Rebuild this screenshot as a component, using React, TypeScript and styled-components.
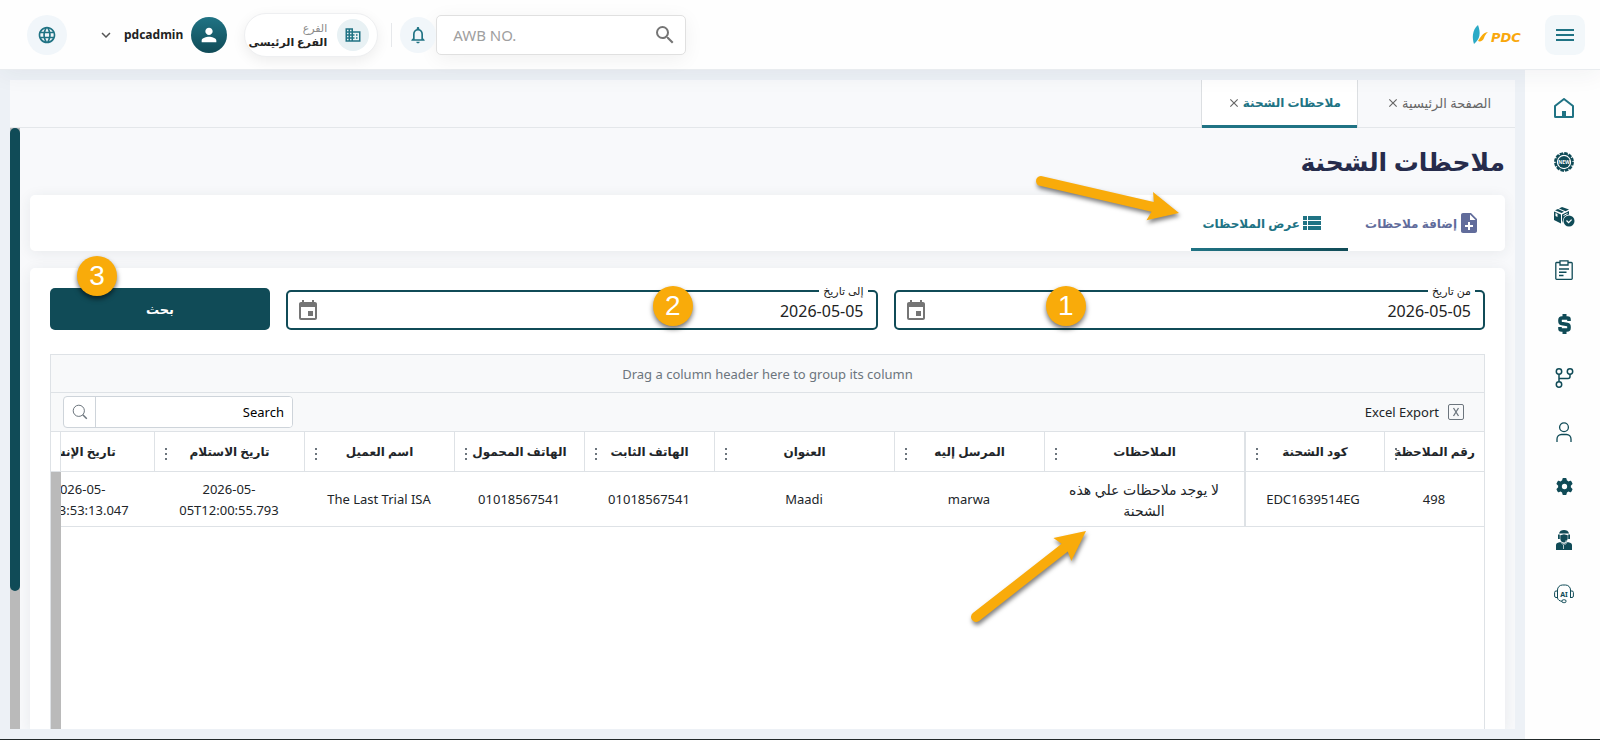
import React from "react";
import styled, { createGlobalStyle } from "styled-components";
import {
  MdBusiness,
  MdClose,
  MdEvent,
  MdKeyboardArrowDown,
  MdLanguage,
  MdMenu,
  MdNoteAdd,
  MdNotificationsNone,
  MdPerson,
  MdSearch,
  MdViewList,
} from "react-icons/md";
import { FaGear } from "react-icons/fa6";

const teal = "#207384";
const deep = "#104b57";
const orange = "#f9ab0a";
const line = "#dee2e6";
const uiFont = `"Noto Sans", "DejaVu Sans", sans-serif`;

const GlobalStyle = createGlobalStyle`
  *, *::before, *::after { box-sizing: border-box; }
  body { margin: 0; background: #edf1f6; font-family: ${uiFont}; color: #212529; }
  button, input { font-family: inherit; }
  button { border: 0; background: none; padding: 0; cursor: pointer; color: inherit; }
  svg { flex: none; }
`;

const Page = styled.div`
  height: 100vh;
  display: flex;
  flex-direction: column;
  border-bottom: 1px solid #22292a;
`;

/* ---------- top bar ---------- */

const TopBar = styled.header`
  flex: none;
  height: 70px;
  padding: 0 15px 0 27px;
  display: flex;
  align-items: center;
  background: #fefefe;
  border-bottom: 1px solid #e9ecef;
  box-shadow: 0 4px 24px rgba(30, 50, 70, 0.06);
  position: relative;
`;

const MenuButton = styled.button`
  width: 40px;
  height: 40px;
  border-radius: 10px;
  background: #f2f7fa;
  color: ${teal};
  display: grid;
  place-items: center;
`;

const Logo = styled.a`
  margin-right: 19px;
  display: flex;
`;

const Spacer = styled.div`
  flex: 1;
`;

const AwbSearch = styled.form`
  width: 250px;
  height: 40px;
  direction: ltr;
  display: flex;
  align-items: center;
  padding: 0 8px 0 16px;
  border: 1px solid #e0e0e0;
  border-radius: 5px;
  background: #fff;
  color: #757575;
  box-shadow: 0 4px 20px rgba(0, 0, 0, 0.06);
`;

const AwbInput = styled.input`
  flex: 1;
  min-width: 0;
  border: 0;
  padding: 0;
  outline: 0;
  font-size: 15px;
  background: none;
  &::placeholder { color: #a0a0a0; opacity: 1; }
`;

const IconButton = styled.button`
  display: grid;
  place-items: center;
`;

const RoundButton = styled.button<{ $size: number }>`
  width: ${(p) => p.$size}px;
  height: ${(p) => p.$size}px;
  border-radius: 50%;
  background: #f1f6fa;
  color: ${teal};
  display: grid;
  place-items: center;
`;

const Divider = styled.span`
  width: 1px;
  height: 24px;
  margin: 0 8px 0 13px;
  background: #e6e8eb;
`;

const BranchPill = styled.button`
  width: 134px;
  height: 44px;
  margin-left: 17px;
  padding: 0 8px;
  border: 1px solid #eeeff1;
  border-radius: 22px;
  display: flex;
  align-items: center;
  gap: 10px;
  background: #fff;
  box-shadow: 0 4px 14px rgba(0, 0, 0, 0.07);
`;

const BranchIcon = styled.span`
  flex: none;
  width: 32px;
  height: 32px;
  border-radius: 50%;
  background: #e8f1f4;
  color: ${teal};
  display: grid;
  place-items: center;
`;

const BranchText = styled.span`
  display: flex;
  flex-direction: column;
  align-items: flex-start;
  white-space: nowrap;
`;

const BranchCaption = styled.span`
  font-size: 11px;
  line-height: 14px;
  color: #8a8a8a;
`;

const BranchName = styled.span`
  font-size: 11px;
  line-height: 14px;
  font-weight: 700;
  color: #222;
`;

const UserMenu = styled.button`
  display: flex;
  align-items: center;
  font-size: 12px;
  font-weight: 700;
  color: #222;
`;

const Avatar = styled.span`
  width: 36px;
  height: 36px;
  margin-left: 8px;
  border-radius: 50%;
  background: linear-gradient(#207384, #104b57);
  color: #fff;
  display: grid;
  place-items: center;
`;

const Chevron = styled(MdKeyboardArrowDown)`
  margin-right: 9px;
  color: #555;
`;

const GlobeSlot = styled.div`
  margin-right: 30px;
`;

/* ---------- frame ---------- */

const Body = styled.div`
  flex: 1;
  min-height: 0;
  display: flex;
`;

const SideNav = styled.nav`
  flex: none;
  width: 75px;
  background: #fefefe;
  padding: 27px 0 0;
  display: flex;
  flex-direction: column;
  align-items: center;
  gap: 32px;
`;

const SideLink = styled.a<{ $active?: boolean }>`
  width: 22px;
  height: 22px;
  margin-left: 3px;
  display: grid;
  place-items: center;
  color: ${(p) => (p.$active ? teal : deep)};
`;

const Workspace = styled.div`
  flex: 1;
  min-width: 0;
  margin: 10px;
  display: flex;
  flex-direction: column;
  background: #f8f9fb;
`;

const PageTabs = styled.div`
  flex: none;
  height: 48px;
  display: flex;
  border-bottom: 1px solid #e4e7ea;
`;

const PageTab = styled.div<{ $active?: boolean }>`
  width: 157px;
  height: 48px;
  padding: ${(p) => (p.$active ? "0 16px 2px" : "0 24px 2px")};
  display: flex;
  align-items: center;
  gap: 2px;
  border: solid #dcdfe2;
  border-width: ${(p) => (p.$active ? "0 1px" : "0")};
  box-shadow: ${(p) => (p.$active ? `inset 0 -3px ${teal}` : "none")};
  background: ${(p) => (p.$active ? "#fff" : "none")};
  color: ${(p) => (p.$active ? teal : "#666")};
`;

const PageTabName = styled.button<{ $active?: boolean }>`
  font-size: ${(p) => (p.$active ? 12 : 13)}px;
  font-weight: ${(p) => (p.$active ? 700 : 400)};
  line-height: 20px;
  white-space: nowrap;
`;

const CloseButton = styled.button`
  display: grid;
  color: #666;
`;

const ScrollArea = styled.div`
  flex: 1;
  min-height: 0;
  display: flex;
`;

const Rail = styled.div`
  flex: none;
  width: 10px;
  background: #bababa;
`;

const Thumb = styled.div`
  height: 77%;
  border-radius: 5px;
  background: ${deep};
`;

const Content = styled.main`
  flex: 1;
  min-width: 0;
  overflow: hidden;
  padding: 11px 10px 0;
  display: flex;
  flex-direction: column;
`;

const Title = styled.h1`
  flex: none;
  margin: 0 0 12px;
  font-size: 25px;
  line-height: 44px;
  font-weight: 700;
  color: #262c4c;
`;

const Card = styled.section`
  background: #fff;
  border-radius: 5px;
  box-shadow: 0 2px 14px rgba(40, 50, 60, 0.08);
`;

const ViewTabs = styled(Card)`
  flex: none;
  height: 56px;
  margin-bottom: 17px;
  display: flex;
  position: relative;
`;

const ViewTab = styled.button<{ $active?: boolean }>`
  width: 157px;
  padding: 0 24px 0 8px;
  display: flex;
  align-items: center;
  font-size: 12px;
  font-weight: 700;
  white-space: nowrap;
  color: ${(p) => (p.$active ? teal : "#616c9b")};
  background: ${(p) =>
    p.$active ? `linear-gradient(90deg, ${teal}, ${deep}) bottom / 100% 3px no-repeat` : "none"};
`;

const ResultCard = styled(Card)`
  flex: 1;
  min-height: 0;
  padding: 16px 20px 0;
  display: flex;
  flex-direction: column;
  border-radius: 5px 5px 0 0;
`;

/* ---------- filters ---------- */

const Filters = styled.form`
  flex: none;
  display: flex;
  align-items: flex-end;
  gap: 16px;
  margin-bottom: 24px;
`;

const DateBox = styled.fieldset`
  flex: 1;
  min-width: 0;
  height: 46px;
  margin: 0;
  padding: 0 12px 0 8px;
  border: 2px solid ${deep};
  border-radius: 5px;
  position: relative;
`;

const DateLegend = styled.legend`
  height: 14px;
  padding: 0 4px;
  margin-right: -4px;
  font-size: 11px;
  line-height: 14px;
  color: #222;
`;

const DateLine = styled.div`
  height: 25px;
  display: flex;
  align-items: center;
  color: #757575;
`;

const DateInput = styled.input`
  flex: 1;
  min-width: 0;
  border: 0;
  padding: 0;
  outline: 0;
  font-size: 16px;
  line-height: 24px;
  color: #222;
  background: none;
`;

const SubmitBox = styled.div`
  flex: none;
  width: 220px;
  position: relative;
`;

const SubmitButton = styled.button`
  width: 100%;
  height: 42px;
  border-radius: 5px;
  background: ${deep};
  color: #fff;
  font-size: 13px;
  font-weight: 700;
`;

/* ---------- grid ---------- */

const Grid = styled.div`
  flex: 1;
  min-height: 0;
  display: flex;
  flex-direction: column;
  border: 1px solid ${line};
  border-bottom: 0;
  font-size: 13px;
`;

const GroupDrop = styled.div`
  flex: none;
  height: 38px;
  border-bottom: 1px solid ${line};
  background: #f8f9fa;
  color: #6c757d;
  text-align: center;
  line-height: 38px;
`;

const Toolbar = styled.div`
  flex: none;
  height: 39px;
  padding: 0 20px 0 12px;
  display: flex;
  align-items: center;
  justify-content: space-between;
  border-bottom: 1px solid ${line};
  background: #f8f9fa;
`;

const ExportButton = styled.button`
  display: flex;
  align-items: center;
  gap: 9px;
  font-size: 13px;
`;

const GridSearch = styled.div`
  width: 230px;
  height: 32px;
  display: flex;
  border: 1px solid #ced4da;
  border-radius: 4px;
  background: #fff;
  overflow: hidden;
`;

const GridSearchInput = styled.input`
  flex: 1;
  min-width: 0;
  border: 0;
  padding: 0 8px;
  outline: 0;
  font-size: 13px;
  &::placeholder { color: #000; opacity: 1; }
`;

const GridSearchButton = styled.button`
  width: 32px;
  border-right: 1px solid #ced4da;
  display: grid;
  place-items: center;
`;

const GridBody = styled.div`
  flex: 1;
  min-height: 0;
  display: flex;
  position: relative;
`;

const TableClip = styled.div`
  flex: 1;
  min-width: 0;
  overflow: hidden;
`;

const Gutter = styled.div`
  flex: none;
  width: 10px;
  display: flex;
  flex-direction: column;
`;

const GutterHead = styled.div`
  flex: none;
  height: 40px;
  border-right: 1px solid ${line};
  border-bottom: 1px solid ${line};
`;

const GutterRail = styled.div`
  flex: 1;
  background: #bababa;
`;

const Table = styled.table`
  table-layout: fixed;
  width: 1480px;
  border-collapse: separate;
  border-spacing: 0;
`;

const Th = styled.th<{ $frozen?: boolean }>`
  height: 40px;
  padding: 0 8px;
  border-bottom: 1px solid ${line};
  border-left: ${(p) => (p.$frozen ? 2 : 1)}px solid ${line};
  font-size: 12px;
  font-weight: 700;
  white-space: nowrap;
  position: relative;
`;

const ColumnMenu = styled.button`
  position: absolute;
  left: 10px;
  top: 16px;
  width: 2px;
  height: 12px;
  display: flex;
  flex-direction: column;
  justify-content: space-between;
`;

const Dot = styled.span`
  width: 2px;
  height: 2px;
  background: #6c757d;
`;

const Td = styled.td<{ $frozen?: boolean; $arabic?: boolean }>`
  height: 55px;
  padding: 1px 16px 0;
  border-bottom: 1px solid ${line};
  border-left: ${(p) => (p.$frozen ? `2px solid ${line}` : "0")};
  text-align: center;
  font-size: ${(p) => (p.$arabic ? 14 : 13)}px;
  line-height: 21px;
`;

/* ---------- guide marks ---------- */

const Marker = styled.span<{ $left: string; $top: number }>`
  position: absolute;
  left: ${(p) => p.$left};
  top: ${(p) => p.$top}px;
  width: 40px;
  height: 40px;
  margin-left: -20px;
  border-radius: 50%;
  background: ${orange};
  box-shadow: 0 3px 5px rgba(0, 0, 0, 0.55);
  color: #fff;
  font: 28px/40px "Liberation Sans", Arial, sans-serif;
  text-align: center;
`;

const ArrowSvg = styled.svg<{ $right: number; $top: number }>`
  position: absolute;
  right: ${(p) => p.$right}px;
  top: ${(p) => p.$top}px;
  overflow: visible;
  pointer-events: none;
  filter: drop-shadow(1px 3px 2px rgba(0, 0, 0, 0.5));
`;

type ArrowProps = { right: number; top: number; dx: number; dy: number };

/* Arrow drawn from the left end of its box (tail) to the point dx, dy away. */
function Arrow({ right, top, dx, dy }: ArrowProps) {
  const len = Math.hypot(dx, dy);
  const angle = (Math.atan2(dy, dx) * 180) / Math.PI;
  const neck = len - 27;
  const wing = len - 30;
  return (
    <ArrowSvg $right={right} $top={top} width={dx} height={Math.abs(dy)} aria-hidden="true">
      <g transform={`translate(0 ${dy < 0 ? -dy : 0}) rotate(${angle})`}>
        <path
          fill={orange}
          d={`M0 -5H${neck}L${wing} -14.5L${len} 0L${wing} 14.5L${neck} 5H0A5 5 0 0 1 0 -5Z`}
        />
      </g>
    </ArrowSvg>
  );
}

/* ---------- icons ---------- */

const LogoMark = () => (
  <svg width="54" height="22" viewBox="0 0 54 22" direction="ltr" role="img" aria-label="PDC">
    <path d="M6 1C0 6 0 14 2 20C8 15 9 9 6 1Z" fill="#2baac6" />
    <path d="M16 8C10 9 9 13 6 17C8 18 11 17 12 14C13 11 14 10 16 8Z" fill="#f9ab0a" />
    <text
      x="19"
      y="17.500"
      fontFamily="DejaVu Sans, sans-serif"
      fontSize="13"
      fontWeight="700"
      fontStyle="italic"
      fill="#f9a70c"
    >
      PDC
    </text>
  </svg>
);

const HomeIcon = () => (
  <svg width="20" height="20" viewBox="0 0 20 20" fill="none" stroke="currentColor" strokeWidth="2" strokeLinejoin="round">
    <path d="M1 8L10 1L19 8V18.500A.5.5 0 0 1 18.500 19H1.500A.5.5 0 0 1 1 18.500Z" />
    <path d="M8 13H12V19H8Z" fill="currentColor" stroke="none" />
  </svg>
);

const NewBadgeIcon = () => (
  <svg width="20" height="20" viewBox="0 0 20 20" direction="ltr">
    <circle cx="10" cy="10" r="8.600" fill="none" stroke="currentColor" strokeWidth="2.600" strokeDasharray="3.400 1.100" />
    <circle cx="10" cy="10" r="7.800" fill="none" stroke="currentColor" strokeWidth="1.200" />
    <circle cx="10" cy="10" r="6" fill="currentColor" />
    <text x="10" y="12" fontSize="5" fontWeight="700" fill="#fff" textAnchor="middle">NEW</text>
  </svg>
);

const BoxCheckIcon = () => (
  <svg width="21" height="21" viewBox="0 0 21 21" fill="currentColor">
    <path d="M0 5.500L7 8.500V17.500L0 14Z" />
    <path d="M1 4.200L4 3L10 5.800L7.500 7Z" />
    <path d="M5 2.500L8 1L15 3.600L11.500 5.200Z" />
    <path d="M8 8.500L15 5V8.600C12 8.800 9.500 11 9 14L8 17Z" />
    <path d="M1.500 7L3.500 8V11L1.500 10Z" fill="#fff" />
    <path d="M9.500 9.500L13.500 7.500" stroke="#fff" strokeWidth="1" />
    <circle cx="15" cy="15" r="5.500" />
    <path d="M12.500 14.500L14.600 16.600L17.600 13.600" fill="none" stroke="#fff" strokeWidth="1.300" />
  </svg>
);

const ClipboardIcon = () => (
  <svg width="18" height="20" viewBox="0 0 18 20" fill="none" stroke="currentColor" strokeWidth="1.300">
    <path d="M5 2.500H1.500A.8.8 0 0 0 .8 3.300V18.500A.8.8 0 0 0 1.600 19.300H16.400A.8.8 0 0 0 17.200 18.500V3.300A.8.8 0 0 0 16.400 2.500H13" />
    <path d="M5 .8H13V5H5Z" />
    <path d="M4 9H14M4 12.300H11.500M4 15.600H8.500" strokeWidth="1.500" />
  </svg>
);

const DollarIcon = () => (
  <svg width="13" height="20" viewBox="0 0 13 20" fill="none" stroke="currentColor">
    <path d="M11 7V5.500C11 4.600 10.600 4 9.600 4H4C2.600 4 2 4.800 2 6V7.300C2 8.400 2.600 9.300 3.600 9.500L9.400 10.500C10.500 10.700 11 11.700 11 12.700V14C11 15.200 10.400 16 9 16H3.400C2.400 16 2 15.400 2 14.500V13" strokeWidth="3.600" />
    <path d="M6.500 0V4M6.500 16V20" strokeWidth="4" />
  </svg>
);

const BranchesIcon = () => (
  <svg width="19" height="20" viewBox="0 0 19 20" fill="none" stroke="currentColor" strokeWidth="1.500">
    <circle cx="4" cy="3.500" r="2.700" />
    <circle cx="15" cy="3.500" r="2.700" />
    <circle cx="4" cy="16.500" r="2.700" />
    <path d="M4 6.200V13.800M15 6.200V8.500A2 2 0 0 1 13 10.500H4" />
  </svg>
);

const PersonIcon = () => (
  <svg width="16" height="20" viewBox="0 0 16 20" fill="none" stroke="currentColor" strokeWidth="1.300">
    <circle cx="8" cy="5.200" r="4.400" />
    <path d="M1 20V17A4.500 4.500 0 0 1 5.500 12.500H10.500A4.500 4.500 0 0 1 15 17V20" />
  </svg>
);

const AgentIcon = () => (
  <svg width="16" height="20" viewBox="0 0 16 20" fill="currentColor">
    <path d="M3 3.500C3.500 1 5.500 0 8 0S12.500 1 13 3.500Z" />
    <path d="M2 4.500H3.800V9H2ZM12.200 4.500H14V9H12.200Z" />
    <path d="M4.300 5.200L8 4.300L11.700 5.200V8.500C11.700 11 10 12.500 8 12.500S4.300 11 4.300 8.500Z" />
    <path d="M0 20V15C0 13 2 12.500 4.500 12L8 14L11.500 12C14 12.500 16 13 16 15V20Z" />
    <path d="M5 12.500L7.500 15V19M11 12.500L8.500 15M12.500 9C12 10.500 10.500 11.200 9 11.200" fill="none" stroke="#fff" strokeWidth=".7" />
  </svg>
);

const AiHeadsetIcon = () => (
  <svg width="20" height="20" viewBox="0 0 20 20" direction="ltr" fill="none" stroke="currentColor" strokeWidth="1">
    <path d="M3.500 14V6A5 5 0 0 1 8.500 1H11.500A5 5 0 0 1 16.500 6V14" />
    <path d="M3.500 7H2A1.500 1.500 0 0 0 .6 8.500V12A1.500 1.500 0 0 0 2 13.500H3.500ZM16.500 7H18A1.500 1.500 0 0 1 19.400 8.500V12A1.500 1.500 0 0 1 18 13.500H16.500Z" />
    <path d="M3.500 14C4 16 5.500 17 8 17.300" />
    <rect x="8" y="15.800" width="4" height="2.800" rx="1.200" />
    <text x="10" y="12.600" fontSize="7" fontWeight="700" fill="currentColor" stroke="none" textAnchor="middle">AI</text>
  </svg>
);

const ThinSearchIcon = () => (
  <svg width="16" height="16" viewBox="0 0 16 16" fill="none" stroke="#6c757d" strokeWidth="1">
    <circle cx="6.800" cy="6.800" r="5.600" />
    <path d="M10.800 10.800L14.800 14.800" strokeWidth="1.500" />
  </svg>
);

const ExcelIcon = () => (
  <svg width="16" height="16" viewBox="0 0 16 16" fill="none" stroke="#6c757d">
    <rect x=".5" y=".5" width="15" height="15" rx="1.500" />
    <path d="M5.500 4L10.500 12M10.500 4L5.500 12" strokeWidth="1.300" />
  </svg>
);

/* ---------- data ---------- */

const sideItems = [
  { name: "الرئيسية", icon: <HomeIcon />, active: true },
  { name: "جديد", icon: <NewBadgeIcon /> },
  { name: "الشحنات", icon: <BoxCheckIcon /> },
  { name: "التقارير", icon: <ClipboardIcon /> },
  { name: "الحسابات", icon: <DollarIcon /> },
  { name: "الفروع", icon: <BranchesIcon /> },
  { name: "العملاء", icon: <PersonIcon /> },
  { name: "الإعدادات", icon: <FaGear size={17} /> },
  { name: "خدمة العملاء", icon: <AgentIcon /> },
  { name: "المساعد", icon: <AiHeadsetIcon /> },
];

const columns = [
  { title: "رقم الملاحظة", width: 100, value: "498" },
  { title: "كود الشحنة", width: 140, value: "EDC1639514EG", frozen: true },
  { title: "الملاحظات", width: 200, value: "لا يوجد ملاحظات علي هذه الشحنة", arabic: true },
  { title: "المرسل إليه", width: 150, value: "marwa" },
  { title: "العنوان", width: 180, value: "Maadi" },
  { title: "الهاتف الثابت", width: 130, value: "01018567541" },
  { title: "الهاتف المحمول", width: 130, value: "01018567541" },
  { title: "اسم العميل", width: 150, value: "The Last Trial ISA" },
  { title: "تاريخ الاستلام", width: 150, value: "2026-05-05T12:00:55.793" },
  { title: "تاريخ الإنشاء", width: 150, value: "2026-05-05T13:53:13.047" },
];

type DateFieldProps = { id: string; label: string; mark: string; markLeft: string };

function DateField({ id, label, mark, markLeft }: DateFieldProps) {
  return (
    <DateBox>
      <DateLegend>
        <label htmlFor={id}>{label}</label>
      </DateLegend>
      <DateLine>
        <DateInput id={id} defaultValue="2026-05-05" />
        <IconButton type="button" aria-label="التقويم">
          <MdEvent size={24} />
        </IconButton>
      </DateLine>
      <Marker $left={markLeft} $top={-12}>{mark}</Marker>
    </DateBox>
  );
}

export default function App() {
  return (
    <Page dir="rtl" lang="ar">
      <GlobalStyle />
      <TopBar>
        <MenuButton aria-label="القائمة"><MdMenu size={24} /></MenuButton>
        <Logo href="#home"><LogoMark /></Logo>
        <Spacer />
        <AwbSearch>
          <AwbInput placeholder="AWB NO." aria-label="AWB NO." />
          <IconButton type="button" aria-label="بحث"><MdSearch size={24} /></IconButton>
        </AwbSearch>
        <RoundButton $size={36} aria-label="الإشعارات"><MdNotificationsNone size={20} /></RoundButton>
        <Divider />
        <BranchPill>
          <BranchIcon><MdBusiness size={18} /></BranchIcon>
          <BranchText>
            <BranchCaption>الفرع</BranchCaption>
            <BranchName>الفرع الرئيسى</BranchName>
          </BranchText>
        </BranchPill>
        <UserMenu>
          <Avatar><MdPerson size={22} /></Avatar>
          pdcadmin
          <Chevron size={18} />
        </UserMenu>
        <GlobeSlot>
          <RoundButton $size={40} aria-label="اللغة"><MdLanguage size={20} /></RoundButton>
        </GlobeSlot>
      </TopBar>

      <Body>
        <SideNav>
          {sideItems.map((item) => (
            <SideLink key={item.name} href="#" aria-label={item.name} $active={item.active}>
              {item.icon}
            </SideLink>
          ))}
        </SideNav>

        <Workspace>
          <PageTabs>
            <PageTab>
              <PageTabName>الصفحة الرئيسية</PageTabName>
              <CloseButton aria-label="إغلاق"><MdClose size={14} /></CloseButton>
            </PageTab>
            <PageTab $active>
              <PageTabName $active>ملاحظات الشحنة</PageTabName>
              <CloseButton aria-label="إغلاق"><MdClose size={14} /></CloseButton>
            </PageTab>
          </PageTabs>

          <ScrollArea>
            <Content>
              <Title>ملاحظات الشحنة</Title>
              <ViewTabs as="div">
                <ViewTab><MdNoteAdd size={24} />إضافة ملاحظات</ViewTab>
                <ViewTab $active><MdViewList size={24} />عرض الملاحظات</ViewTab>
                <Arrow right={326} top={-14} dx={138} dy={32} />
              </ViewTabs>

              <ResultCard>
                <Filters>
                  <DateField id="from-date" label="من تاريخ" mark="1" markLeft="29%" />
                  <DateField id="to-date" label="إلى تاريخ" mark="2" markLeft="65.5%" />
                  <SubmitBox>
                    <SubmitButton type="button">بحث</SubmitButton>
                    <Marker $left="47px" $top={-32}>3</Marker>
                  </SubmitBox>
                </Filters>

                <Grid>
                  <GroupDrop>Drag a column header here to group its column</GroupDrop>
                  <Toolbar>
                    <ExportButton><ExcelIcon />Excel Export</ExportButton>
                    <GridSearch>
                      <GridSearchInput placeholder="Search" aria-label="Search" />
                      <GridSearchButton aria-label="Search"><ThinSearchIcon /></GridSearchButton>
                    </GridSearch>
                  </Toolbar>
                  <GridBody>
                    <TableClip>
                      <Table>
                        <colgroup>
                          {columns.map((c) => <col key={c.title} style={{ width: c.width }} />)}
                        </colgroup>
                        <thead>
                          <tr>
                            {columns.map((c) => (
                              <Th key={c.title} $frozen={c.frozen} scope="col">
                                {c.title}
                                <ColumnMenu aria-label="خيارات العمود"><Dot /><Dot /><Dot /></ColumnMenu>
                              </Th>
                            ))}
                          </tr>
                        </thead>
                        <tbody>
                          <tr>
                            {columns.map((c) => (
                              <Td key={c.title} $frozen={c.frozen} $arabic={c.arabic} dir="auto">{c.value}</Td>
                            ))}
                          </tr>
                        </tbody>
                      </Table>
                    </TableClip>
                    <Gutter>
                      <GutterHead />
                      <GutterRail />
                    </Gutter>
                    <Arrow right={398} top={99} dx={110} dy={-86} />
                  </GridBody>
                </Grid>
              </ResultCard>
            </Content>
            <Rail><Thumb /></Rail>
          </ScrollArea>
        </Workspace>
      </Body>
    </Page>
  );
}
